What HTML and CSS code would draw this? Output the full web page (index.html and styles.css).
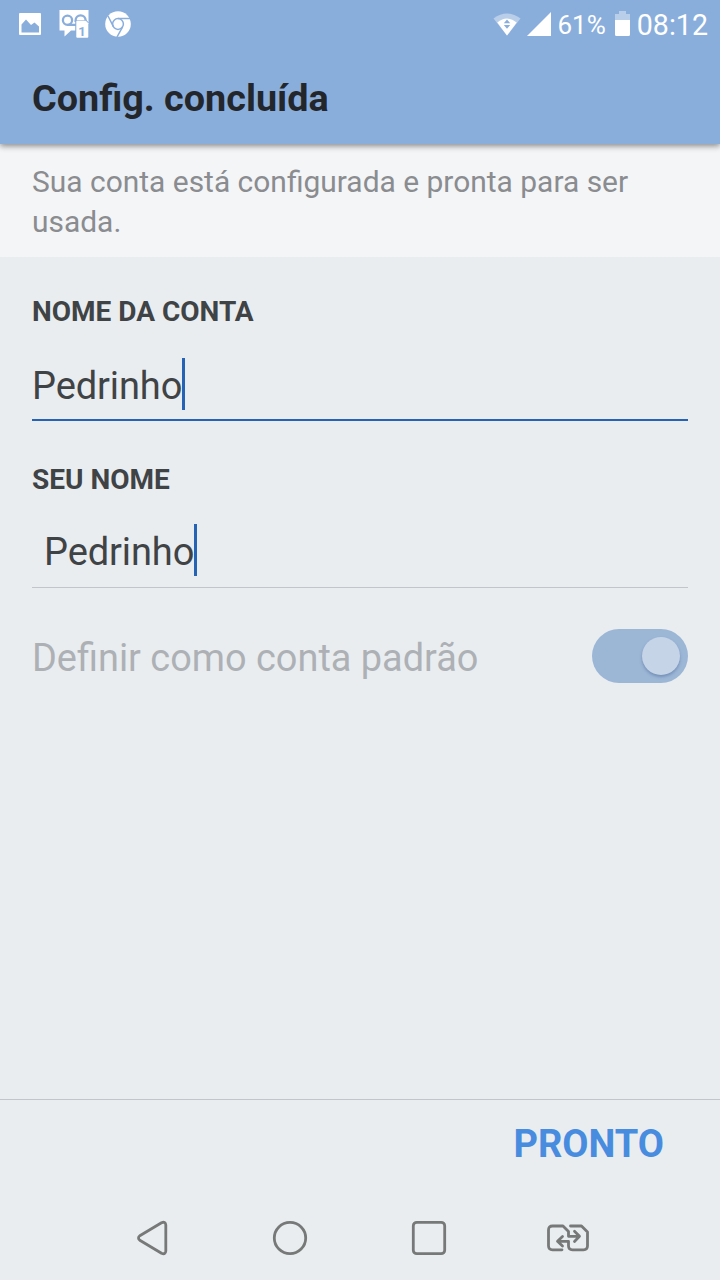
FILE: index.html
```
<!DOCTYPE html>
<html lang="pt-BR">
<head>
  <meta charset="UTF-8">
  <meta name="viewport" content="width=device-width, initial-scale=1.0">
  <title>Config. concluída</title>
  <link rel="stylesheet" href="styles.css">
</head>
<body>
  <header class="header">
    <div class="status-bar">
      <div class="notifications">
        <svg width="24" height="24" viewBox="0 0 24 24">
          <path fill="#fff" fill-rule="evenodd" d="M2 1h20a1 1 0 0 1 1 1v20a1 1 0 0 1-1 1H2a1 1 0 0 1-1-1V2a1 1 0 0 1 1-1zM3.500 20.500h17.500v-6l-4.500-4-3.500 2.500-5-5.500-4.500 5z"/>
        </svg>
        <svg width="30" height="30" viewBox="0 0 30 30">
          <path fill="#fff" d="M.500 1h29v20.500H12l-6.500 6V21.500H.500z"/>
          <g fill="none" stroke="#8aaedc" stroke-width="2.300">
            <circle cx="8.500" cy="11.300" r="4.600"/>
            <path d="M8.500 15.800h9M16.600 13v-1.700a5 5 0 0 1 10 0V13"/>
          </g>
          <path fill="#8aaedc" d="M16.200 11.200h11.500l2.300 2.500V30H16.200z"/>
          <path fill="#fff" d="M17.300 12.800q0-1 1-1h8.500L29.300 14.300v13.400q0 1-1 1h-10q-1 0-1-1z"/>
          <text class="badge-number" x="19.300" y="26.500">1</text>
        </svg>
        <svg width="26" height="26" viewBox="0 0 26 26">
          <circle cx="13" cy="13" r="12.800" fill="#fff"/>
          <g fill="none" stroke="#8aaedc" stroke-width="1.500">
            <circle cx="13" cy="13" r="5.400"/>
            <path d="M13 7.600h12M8.400 15.600 3 5M17.600 15.900 12 26"/>
          </g>
        </svg>
      </div>
      <div class="system">
        <svg class="wifi" width="28" height="23" viewBox="0 0 28 23">
          <path fill="#b9cee9" d="M.500 5.500Q14-4.500 27.500 5.500L14 22.500z"/>
          <path fill="#fff" d="M4.300 9.500Q14 1.500 23.700 9.500L14 22.500z"/>
          <path fill="#8aaedc" d="M10.800 10.300h6.400L14 6.400zM10.800 11.900h6.400L14 15.700z"/>
        </svg>
        <svg class="signal" width="24" height="24" viewBox="0 0 24 24">
          <path fill="#fff" d="M0 24 24 0v24z"/>
        </svg>
        <span class="percent">61%</span>
        <svg class="battery" width="15" height="25" viewBox="0 0 15 25">
          <path fill="#b9cee9" d="M4 0h7v3h4v6H0V3h4z"/>
          <path fill="#fff" d="M0 9h15v14.500a1.500 1.500 0 0 1-1.500 1.500h-12A1.500 1.500 0 0 1 0 23.500z"/>
        </svg>
        <span class="clock">08:12</span>
      </div>
    </div>
    <h1>Config. concluída</h1>
  </header>

  <p class="description">Sua conta está configurada e pronta para ser usada.</p>

  <main class="form">
    <div class="form-group">
      <h2>Nome da conta</h2>
      <div class="field active"><span>Pedrinho</span><i class="caret"></i></div>
    </div>
    <div class="form-group">
      <h2>Seu nome</h2>
      <div class="field indented"><span>Pedrinho</span><i class="caret"></i></div>
    </div>
    <div class="switch-row">
      <span>Definir como conta padrão</span>
      <div class="switch"><div class="thumb"></div></div>
    </div>
  </main>

  <footer class="actions">
    <button type="button">Pronto</button>
  </footer>

  <nav class="nav-bar">
    <svg width="33" height="36" viewBox="0 0 33 36">
      <path d="M3.800 15.800 25.500 2.800Q29.600 1 29.800 5v26Q29.600 35 25.500 33.200L3.800 20.200Q1.200 18 3.800 15.800z"/>
    </svg>
    <svg width="36" height="36" viewBox="0 0 36 36">
      <circle cx="18" cy="18" r="15.700"/>
    </svg>
    <svg width="36" height="36" viewBox="0 0 36 36">
      <rect x="2.300" y="2.300" width="31.400" height="31.400" rx="3.500"/>
    </svg>
    <svg class="switch-nav" width="44" height="28" viewBox="0 0 44 28">
      <path d="M16 25.800H6.500q-4 0-4-4V6q0-4 4-4H17L22.500 7.500v4.800H33M28.500 7.200l5 5.100-5 5.100M24.500 2h11l6 6v13.800q0 4-4 4h-11q-4 0-4-4v-4.500H12M16.500 12.500l-5 4.800 5 4.800"/>
    </svg>
  </nav>
</body>
</html>
```
FILE: styles.css
```
* {
  box-sizing: border-box;
}
body {
  margin: 0;
  height: 1280px;
  display: flex;
  flex-direction: column;
  overflow: hidden;
  font-family: Roboto, sans-serif;
  background-color: #e9edf0;
  color: #3f4346;
}
svg {
  display: block;
  flex: none;
}
.header {
  position: relative;
  z-index: 1;
  height: 144px;
  background-color: #8aaedc;
  box-shadow: 0 2px 6px rgba(0, 0, 0, 0.45);
}
.status-bar {
  height: 48px;
  padding: 0 12px 0 18px;
  display: flex;
  justify-content: space-between;
  align-items: center;
  color: #fff;
}
.notifications,
.system {
  display: flex;
  align-items: center;
}
.notifications {
  gap: 17px;
}
.notifications svg:last-child {
  margin-left: -1px;
}
.badge-number {
  font: bold 13px Roboto, sans-serif;
  fill: #8aaedc;
}
.signal {
  margin: 0 7px 0 6px;
}
.percent {
  font-size: 26px;
  line-height: 50px;
  padding-top: 2px;
}
.battery {
  margin: 0 7px 0 9px;
  transform: translateY(-1px);
}
.clock {
  font-size: 28.6px;
  line-height: 50px;
  padding-top: 2px;
}
h1 {
  margin: 0;
  padding: 0 32px;
  font-size: 37.75px;
  line-height: 100px;
  color: #23272b;
}
.description {
  margin: 0;
  height: 113px;
  padding: 18px 32px 0;
  font-size: 29.95px;
  line-height: 40px;
  color: #8a8c90;
  background-color: #f4f5f7;
}
.form {
  flex: 1;
  padding: 35px 32px 0;
}
.form-group {
  margin-bottom: 38px;
}
h2 {
  margin: 0;
  font-size: 28px;
  line-height: 40px;
  text-transform: uppercase;
}
.field {
  height: 89px;
  padding-top: 26px;
  display: flex;
  font-size: 38px;
  line-height: 56px;
  letter-spacing: -0.1px;
}
.field.active {
  margin-bottom: 39px;
  border-bottom: 2px solid #2763b5;
}
.field.indented {
  height: 88px;
  padding: 24px 0 0 12px;
  border-bottom: 1px solid #c2c6ca;
}
.caret {
  width: 3px;
  height: 52px;
  background-color: #2763b5;
}
.switch-row {
  display: flex;
  justify-content: space-between;
  align-items: center;
  height: 60px;
  font-size: 37.9px;
  color: #adb1b5;
}
.switch-row span {
  padding-top: 4px;
}
.switch {
  width: 96px;
  height: 54px;
  padding: 8px;
  display: flex;
  justify-content: flex-end;
  border-radius: 27px;
  background-color: #9cb6d6;
}
.thumb {
  width: 38px;
  height: 38px;
  border-radius: 50%;
  background-color: #c6d4e7;
  box-shadow: 0 2px 3px rgba(60, 90, 140, 0.4);
}
.actions {
  height: 97px;
  padding: 0 56px;
  display: flex;
  justify-content: flex-end;
  border-top: 1px solid #c2c6ca;
}
button {
  height: 88px;
  padding: 0;
  border: none;
  background: none;
  font-family: inherit;
  font-size: 38px;
  font-weight: bold;
  color: #488ce0;
  text-transform: uppercase;
}
.nav-bar {
  height: 84px;
  padding-left: 136px;
  display: flex;
  gap: 103px;
  align-items: center;
}
.nav-bar svg {
  fill: none;
  stroke: #777978;
  stroke-width: 2.8;
  stroke-linejoin: round;
  stroke-linecap: round;
}
.nav-bar .switch-nav {
  margin-left: -4px;
}
```
